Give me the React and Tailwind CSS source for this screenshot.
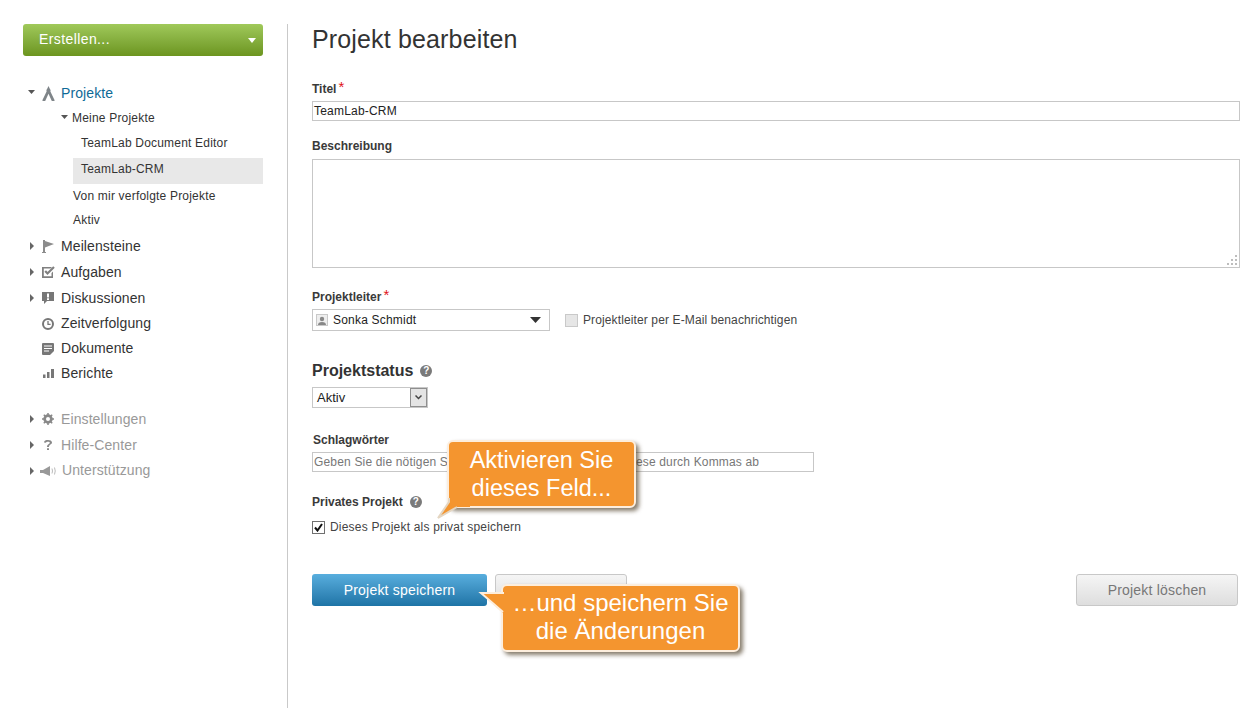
import React from "react";

const font = "font-['Liberation_Sans',Arial,sans-serif]";

const Caret = ({ open }) =>
  open ? (
    <svg width="7" height="4" viewBox="0 0 7 4" className="shrink-0 relative -top-[1px]">
      <path d="M0 0h7L3.500 4z" fill="#555" />
    </svg>
  ) : (
    <svg width="4" height="8" viewBox="0 0 4 8" className="shrink-0 ml-[2px]">
      <path d="M0 0l4 4-4 4z" fill="#666" />
    </svg>
  );

const icons = {
  projects: (
    <svg width="13" height="15" viewBox="0 0 13 15">
      <path d="M6.500 0l1.300 2.800a2.200 2.200 0 0 1 .6 2.600L12.500 14v1H9.800L6.500 7.800 3.200 15H.5v-1L4.600 5.400A2.200 2.200 0 0 1 5.200 2.800z" fill="#7f8589" />
    </svg>
  ),
  flag: (
    <svg width="12" height="13" viewBox="0 0 12 13">
      <path d="M1 0h2v1l9 3L3 7.500V12h1v1H0v-1h1z" fill="#8c8c8c" />
    </svg>
  ),
  task: (
    <svg width="13" height="12" viewBox="0 0 13 12">
      <path d="M0 1h10L8.500 2.500H1.800v7.700h7.700V7L11 5.500V12H0z" fill="#808080" />
      <path d="M3.200 5l2.300 2.500L12 1" fill="none" stroke="#808080" strokeWidth="2.200" />
    </svg>
  ),
  talk: (
    <svg width="12" height="13" viewBox="0 0 12 13">
      <path d="M0 0h12v9H5l-3 3V9H0z" fill="#777" />
      <path d="M5 1.500h2v4H5zM5 6.300h2V8H5z" fill="#fff" />
    </svg>
  ),
  clock: (
    <svg width="12" height="12" viewBox="0 0 12 12">
      <circle cx="6" cy="6" r="5" fill="none" stroke="#777" strokeWidth="2" />
      <path d="M6 3v3.300h2.600" fill="none" stroke="#777" strokeWidth="1.300" />
    </svg>
  ),
  doc: (
    <svg width="12" height="12" viewBox="0 0 12 12">
      <path d="M0 1q0-1 1-1h10q1 0 1 1v7l-4 4H1q-1 0-1-1z" fill="#777" />
      <path d="M2 3h8M2 5.500h8M2 8h5" stroke="#fff" />
    </svg>
  ),
  chart: (
    <svg width="11" height="9" viewBox="0 0 11 9">
      <path d="M0 5.500h2.500V9H0zM4 3h2.500v6H4zM8 0h3v9H8z" fill="#777" />
    </svg>
  ),
  gear: (
    <svg width="12" height="12" viewBox="0 0 12 12">
      <circle cx="6" cy="6" r="3.500" fill="none" stroke="#888" strokeWidth="2.500" />
      <path d="M6 0v12M0 6h12M1.800 1.800l8.400 8.400M10.200 1.800l-8.400 8.400" stroke="#888" strokeWidth="1.500" />
      <circle cx="6" cy="6" r="2" fill="#fff" />
    </svg>
  ),
  help: (
    <svg width="10" height="12" viewBox="0 0 10 12">
      <path d="M1 3.500C1 1.500 3 1 5 1s4 .8 4 2.600C9 5.500 6 5.500 6 8H4c0-3 2.800-3 2.800-4.300C6.800 3 6 2.800 5 2.800S3 3 3 3.800z" fill="#888" />
      <path d="M4 9.300h2V11H4z" fill="#888" />
    </svg>
  ),
  megaphone: (
    <svg width="17" height="10" viewBox="0 0 17 10">
      <path d="M0 4h3l7-4v10L3 7H0z" fill="#999" />
      <path d="M12 2.500q1 2.500 0 5M14.500 1.500q1.500 3.500 0 7" fill="none" stroke="#bbb" />
    </svg>
  ),
};

const HelpDot = () => (
  <span className="inline-flex w-[12px] h-[12px] rounded-full bg-[#7a7a7a] text-white text-[10px] leading-[12px] font-bold items-center justify-center">
    ?
  </span>
);

const Star = () => <span className="text-[#e0121a] text-[15px] font-normal leading-none relative -top-[3px] ml-[2px]">*</span>;

const NavRow = ({ caret, icon, label, height, color = "text-[#333]", iconWide }) => (
  <div className={`flex items-center pl-[28px] ${height}`}>
    <span className="w-[13px] flex justify-start">{caret && <Caret open={caret === "open"} />}</span>
    <span className={`flex justify-center ${iconWide ? "w-[20px] -ml-[3px]" : "w-[14px]"}`}>{icon}</span>
    <span className={`text-[14px] tracking-[0.1px] ${iconWide ? "ml-[4px]" : "ml-[6px]"} ${color}`}>{label}</span>
  </div>
);

const Sidebar = () => (
  <aside className="w-[288px] shrink-0 mt-[24px] border-r border-[#c9c9c9] pl-[23px] pr-[24px] h-[684px]">
    <div className="h-[32px] w-[240px] rounded-[3px] bg-gradient-to-b from-[#a0c95a] to-[#6c951e] flex items-center justify-between pl-[16px] pr-[7px] pb-[2px] text-white text-[14px] tracking-[0.4px]">
      <span>Erstellen...</span>
      <svg width="8" height="5" viewBox="0 0 8 5" className="relative top-[1px]">
        <path d="M0 0h8L4 5z" fill="#fff" />
      </svg>
    </div>
    <nav className="-ml-[23px] mt-[23px] w-[263px]">
      <NavRow caret="open" icon={icons.projects} label="Projekte" height="h-[26px] pt-[2px]" color="text-[#0f6a97]" />
      <div className="flex items-center h-[25px] pl-[61px] text-[12px] tracking-[0.2px] text-[#333]">
        <Caret open />
        <span className="ml-[4px]">Meine Projekte</span>
      </div>
      <div className="h-[28px] pb-[3px] pl-[81px] flex items-center text-[12px] tracking-[0.2px] text-[#333]">TeamLab Document Editor</div>
      <div className="ml-[73px] h-[26px] pb-[5px] pl-[8px] flex items-center bg-[#e8e8e8] text-[12px] tracking-[0.2px] text-[#333]">TeamLab-CRM</div>
      <div className="h-[24px] pl-[73px] flex items-center text-[12px] tracking-[0.2px] text-[#333]">Von mir verfolgte Projekte</div>
      <div className="h-[24px] pl-[73px] flex items-center text-[12px] tracking-[0.2px] text-[#333]">Aktiv</div>
      <div className="h-[1px]" />
      <NavRow caret="closed" icon={icons.flag} label="Meilensteine" height="h-[26px]" />
      <NavRow caret="closed" icon={icons.task} label="Aufgaben" height="h-[26px]" />
      <NavRow caret="closed" icon={icons.talk} label="Diskussionen" height="h-[26px]" />
      <NavRow icon={icons.clock} label="Zeitverfolgung" height="h-[25px]" />
      <NavRow icon={icons.doc} label="Dokumente" height="h-[25px]" />
      <NavRow icon={icons.chart} label="Berichte" height="h-[25px]" />
      <div className="h-[20px]" />
      <NavRow caret="closed" icon={icons.gear} label="Einstellungen" height="h-[26px]" color="text-[#999]" />
      <NavRow caret="closed" icon={icons.help} label="Hilfe-Center" height="h-[26px]" color="text-[#999]" />
      <NavRow caret="closed" icon={icons.megaphone} label="Unterstützung" height="h-[25px]" color="text-[#999]" iconWide />
    </nav>
  </aside>
);

const Label = ({ children, className = "" }) => (
  <div className={`text-[12px] font-bold text-[#3a3a3a] leading-[14px] ${className}`}>{children}</div>
);

const Callout = ({ className, children, tail }) => (
  <div className={`absolute z-10 bg-[#f4952f] border-[2px] border-[#fdeedd] rounded-[6px] shadow-[3px_3px_4px_rgba(70,55,30,0.65)] text-white leading-[28px] text-center font-['Liberation_Sans',Arial,sans-serif] ${className}`}>
    {tail}
    {children}
  </div>
);

const Main = () => (
  <main className="flex-1 pl-[24px] relative">
    <h1 className="mt-[24px] text-[25px] leading-[30px] text-[#333] tracking-[0.15px]">Projekt bearbeiten</h1>

    <Label className="mt-[27px] flex items-center h-[16px]">
      Titel <Star />
    </Label>
    <div className="mt-[4px] h-[20px] border border-[#c7c7c7] pl-[1px] flex items-center text-[12px] tracking-[0.2px] text-[#222]">TeamLab-CRM</div>

    <Label className="mt-[18px]">Beschreibung</Label>
    <div className="mt-[6px] h-[109px] border border-[#c7c7c7] relative">
      <svg width="11" height="11" viewBox="0 0 11 11" className="absolute right-[1px] bottom-[1px]">
        <path d="M8 0h2v2H8zM4 4h2v2H4zM8 4h2v2H8zM0 8h2v2H0zM4 8h2v2H4zM8 8h2v2H8z" fill="#bdbdbd" />
      </svg>
    </div>

    <Label className="mt-[21px] flex items-center h-[16px]">
      Projektleiter <Star />
    </Label>
    <div className="mt-[4px] flex items-center">
      <div className="w-[238px] h-[22px] border border-[#c7c7c7] flex items-center pl-[3px] pr-[8px] text-[12px] tracking-[0.2px] text-[#222]">
        <span className="w-[12px] h-[12px] border border-[#c9c9c9] bg-[#eee] flex items-end justify-center mr-[5px] overflow-hidden">
          <svg width="8" height="9" viewBox="0 0 8 9">
            <circle cx="4" cy="3" r="2.200" fill="#888" />
            <path d="M0 9q0-3 4-3t4 3z" fill="#888" />
          </svg>
        </span>
        <span className="flex-1">Sonka Schmidt</span>
        <svg width="11" height="6" viewBox="0 0 11 6">
          <path d="M0 0h11L5.500 6z" fill="#333" />
        </svg>
      </div>
      <span className="ml-[15px] w-[13px] h-[13px] border border-[#c9c9c9] bg-[#e6e6e6]" />
      <span className="ml-[5px] text-[12px] tracking-[0.12px] text-[#444]">Projektleiter per E-Mail benachrichtigen</span>
    </div>

    <div className="mt-[30px] flex items-center h-[20px]">
      <span className="text-[16px] font-bold text-[#333]">Projektstatus</span>
      <span className="ml-[7px] flex"><HelpDot /></span>
    </div>
    <div className="mt-[6px] w-[116px] h-[21px] border border-[#c7c7c7] flex items-center justify-between text-[13px] text-[#222] pl-[4px]">
      <span>Aktiv</span>
      <span className="w-[17px] h-[19px] border border-[#8e8e8e] bg-[#e4e4e4] flex items-center justify-center">
        <svg width="7" height="5" viewBox="0 0 7 5">
          <path d="M.5.500l3 3 3-3" fill="none" stroke="#444" strokeWidth="1.500" />
        </svg>
      </span>
    </div>

    <Label className="mt-[25px] ml-[1px]">Schlagwörter</Label>
    <div className="mt-[5px] w-[502px] h-[20px] border border-[#c7c7c7] pl-[1px] flex items-center text-[12px] tracking-[0.17px] text-[#777] whitespace-nowrap overflow-hidden">
      Geben Sie die nötigen Schlagwörter ein und trennen Sie diese durch Kommas ab
    </div>

    <div className="mt-[23px] flex items-center h-[14px]">
      <Label>Privates Projekt</Label>
      <span className="ml-[7px] flex"><HelpDot /></span>
    </div>
    <div className="mt-[9px] flex items-center">
      <span className="w-[13px] h-[13px] border border-[#707070] flex items-center justify-center">
        <svg width="9" height="9" viewBox="0 0 9 9">
          <path d="M1 4.500l2.500 3L8 1" fill="none" stroke="#111" strokeWidth="2" />
        </svg>
      </span>
      <span className="ml-[5px] text-[12px] tracking-[0.2px] text-[#444]">Dieses Projekt als privat speichern</span>
    </div>

    <div className="mt-[38px] flex items-start pr-[2px]">
      <div className="w-[175px] h-[32px] rounded-[3px] bg-gradient-to-b from-[#58aede] to-[#1e74a6] flex items-center justify-center text-white text-[14px] tracking-[0.2px]">Projekt speichern</div>
      <div className="ml-[8px] w-[132px] h-[32px] rounded-[3px] border border-[#c8c8c8] bg-gradient-to-b from-[#f5f5f5] to-[#dedede]" />
      <div className="ml-auto w-[162px] h-[32px] rounded-[3px] border border-[#c8c8c8] bg-gradient-to-b from-[#f5f5f5] to-[#dedede] flex items-center justify-center text-[#777] text-[14px] tracking-[0.2px]">Projekt löschen</div>
    </div>

    <Callout
      className="left-[159px] top-[440px] w-[189px] h-[68px] pt-[4px] text-[23.5px]"
      tail={
        <svg width="34" height="30" viewBox="0 0 34 30" className="absolute -left-[13px] top-[48px]">
          <path d="M13 0v12L2 28l19-11h13V0z" fill="#f4952f" />
          <path d="M13 8v4L2 28l19-11" fill="none" stroke="#e4d6c2" strokeWidth="2" />
        </svg>
      }
    >
      Aktivieren Sie
      <br />
      dieses Feld...
    </Callout>

    <Callout
      className="left-[213px] top-[584px] w-[239px] h-[68px] pt-[3px] text-[24px]"
      tail={
        <svg width="30" height="30" viewBox="0 0 30 30" className="absolute -left-[25px] -top-[2px]">
          <path d="M3 9h27v20h-5z" fill="#f4952f" />
          <path d="M25 28L3 9h23" fill="none" stroke="#fdeedd" strokeWidth="2" />
        </svg>
      }
    >
      …und speichern Sie
      <br />
      die Änderungen
    </Callout>
  </main>
);

export default function App() {
  return (
    <div className={`flex w-[1240px] h-[708px] overflow-hidden bg-white ${font}`}>
      <Sidebar />
      <Main />
    </div>
  );
}
